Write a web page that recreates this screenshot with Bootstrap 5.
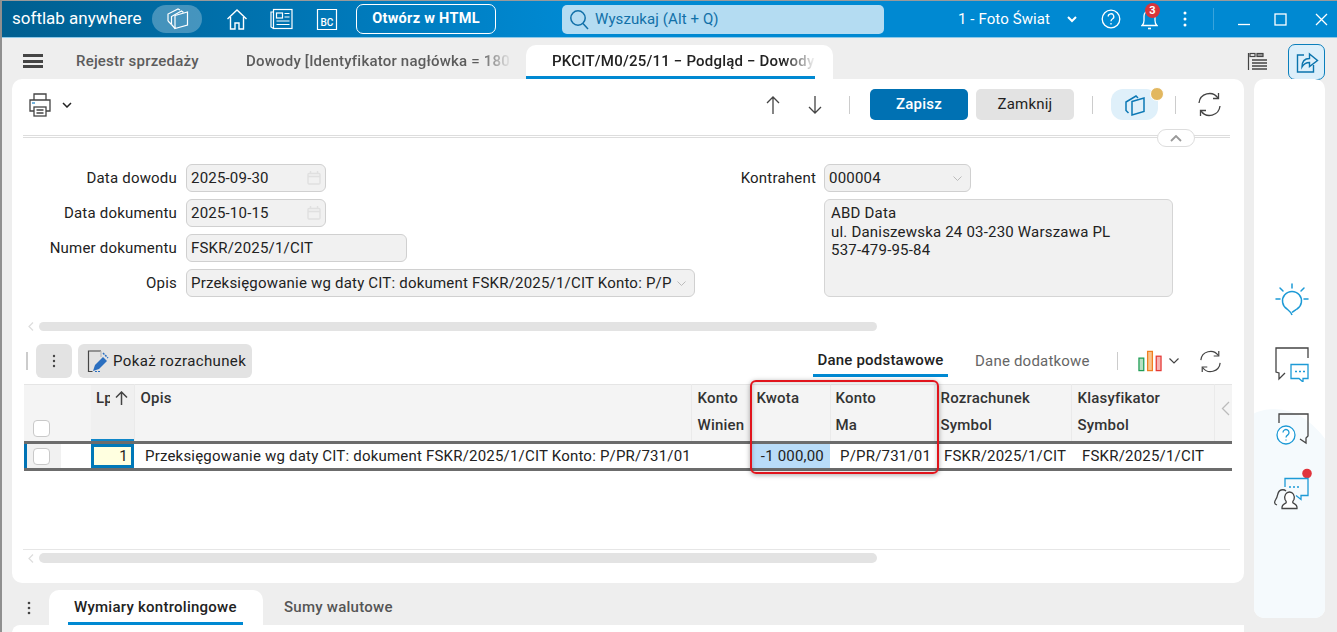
<!DOCTYPE html>
<html lang="pl">
<head>
<meta charset="utf-8">
<title>softlab anywhere</title>
<link href="https://cdn.jsdelivr.net/npm/bootstrap@5.3.0/dist/css/bootstrap.min.css" rel="stylesheet">
<style>
html,body{height:632px;overflow:hidden}
body{width:1337px;margin:0;background:#eee;font-family:Roboto,"Liberation Sans",sans-serif;font-size:15px;color:#222;letter-spacing:.2px}
svg{display:block;flex:none}
.win{height:632px;border-left:2px solid #8f8f8f;border-top:1px solid #9a9a9a;position:relative;overflow:hidden}
.tbar{height:37px;background:linear-gradient(90deg,#005f90 0,#0078b8 25%,#0089d2 42%,#0089d2 100%);color:#fff;border-bottom:1px solid #8cc8e8}
.brand{margin-left:10px;width:140px;font-size:17px;letter-spacing:0;white-space:nowrap}
.appill{width:50px;height:28px;border-radius:14px;background:rgba(255,255,255,.27);justify-content:center}
.openbtn{width:140px;height:30px;margin-left:18px;border:1.5px solid #fff;border-radius:7px;color:#fff;font-weight:700;font-size:14.5px;background:none;padding:0;letter-spacing:.3px}
.srch{width:322px;height:29px;margin-left:66px;background:#b4dcf2;border-radius:5px;color:#1170a8;font-size:15px;letter-spacing:.1px;padding-left:7px;gap:6px}
.comp{margin-left:74px;width:109px;font-size:15px;letter-spacing:.1px;white-space:nowrap}
.badgered{position:absolute;left:4px;top:-5px;width:15px;height:15px;border-radius:50%;background:#d9343a;color:#fff;font-size:11px;font-weight:700;letter-spacing:0;line-height:15px;text-align:center}
.tabsrow{height:41px;padding-left:21px}
.ham{width:20px;height:14px;margin-right:33px;margin-top:5px;border-top:3px solid #444;border-bottom:3px solid #444;position:relative}
.ham::after{content:"";position:absolute;left:0;right:0;top:2.5px;height:3px;background:#444}
.tabx{height:34px;align-self:flex-end;display:flex;align-items:center;font-weight:500;color:#5c5c5c;white-space:nowrap;padding-bottom:2px}
.tab1{width:170px}
.tab2{width:280px;overflow:hidden}
.tabtxt{display:block;overflow:hidden;-webkit-mask-image:linear-gradient(90deg,#000 88%,transparent 100%);mask-image:linear-gradient(90deg,#000 88%,transparent 100%)}
.tab2 .tabtxt{width:266px}
.tabon{width:307px;background:#fff;border-radius:10px 10px 0 0;padding-left:26px;color:#222;position:relative}
.tabon .tabtxt{width:264px}
.tabon::after{content:"";position:absolute;left:0;width:289px;bottom:0;height:3px;background:#0089d2}
.listicon{margin-left:auto;margin-top:5px}
.sharebtn{width:37px;height:36px;margin-left:20px;margin-right:12px;align-self:flex-end;margin-bottom:-1px;position:relative;border:1.5px solid #0a7fbc;border-radius:7px;background:#dceffa;justify-content:center}
.bodyrow{padding-left:10px;gap:10px}
.maincard{width:1232px;height:504px;background:#fff;border-radius:10px;padding:0 12px 0 11px;position:relative}
.side{width:71px;height:539px;border-radius:10px;background:#fff;overflow:hidden;position:relative}
.sidebg{position:absolute;left:-60px;right:-30px;top:330px;bottom:-60px;background:#f5fafd;border-radius:50% 50% 0 0}
.sicons{position:relative;padding-top:204px;padding-left:5px}
.tools{height:51px;padding-left:6px}
.sep{width:1px;height:18px;background:#ccc}
.btnsave,.btnclose{width:98px;height:31px;border-radius:5px;border:0;font-size:15px;font-weight:500;padding:0;letter-spacing:.2px}
.btnsave{background:#0071b3;color:#fff}
.btnclose{background:#e3e3e3;color:#222;margin-left:8px;font-weight:400}
.bookpill{width:47px;height:31px;border-radius:12px;background:#dff0fa;position:relative;justify-content:center}
.bookpill::after{content:"";position:absolute;right:-6px;top:-2px;width:14px;height:14px;border-radius:50%;background:#e2b75f;border:1px solid #fff}
.collapser{height:18px;position:relative;margin-right:2px;margin-top:-1px}
.collapser::before{content:"";position:absolute;left:0;right:0;top:6px;height:3px;border-top:1px solid #ddd;border-bottom:1px solid #ddd}
.colpill{position:absolute;left:1134px;top:0;width:38px;height:18px;border:1px solid #ddd;border-radius:9px;background:#fff;justify-content:center}
.formarea{margin-top:17px;height:133px}
.fcol{width:663px;gap:7px}
.fline{height:28px;gap:9px}
.flab{width:154px;flex:none;text-align:right;white-space:nowrap}
.flab2{width:130px}
.fbox{height:28px;flex:none;background:#f1f1f1;border:1px solid #d0d0d0;border-radius:6px;padding:0 4px;white-space:nowrap;color:#222}
.w140{width:140px}.w221{width:221px}.w509{width:509px}.w147{width:147px}
.opistxt{flex:1}
.addr{width:349px;height:98px;margin-left:138px;margin-top:7px;background:#f1f1f1;border:1px solid #d5d5d5;border-radius:6px;padding:4px 6px;line-height:18.5px}
.hscr{height:9px;padding-left:5px;gap:5px}
.hscr1{margin-top:25px}
.thumb{width:838px;height:9px;border-radius:5px;background:#e3e3e3}
.gtools{margin-top:13px;height:34px;gap:6px}
.vbar{width:2px;height:18px;background:#ccc;margin:0 2px 0 3px}
.gbtn{height:34px;background:#e3e3e3;border-radius:6px;border:0;padding:0}
.gb1{width:36px;justify-content:center}
.gb2{width:174px;padding-left:9px;gap:4px;color:#222;letter-spacing:.37px}
.dtabs{margin-left:auto;height:34px;font-weight:500}
.dt1{width:135px;text-align:center;border-bottom:3px solid #0089d2;height:32px;line-height:30px;margin-right:27px;color:#222;margin-top:-1px}
.dt2{width:114px;color:#666;font-weight:400;margin-right:28px;white-space:nowrap}
.tablewrap{margin-top:6px;width:1208px;height:86px;position:relative;margin-left:1px}
.gtab{table-layout:fixed;width:1208px;border-collapse:collapse;margin:0}
.gtab th,.gtab td{padding:0;background:none;border:0;color:#222;white-space:nowrap;overflow:hidden}
.gtab thead tr{height:58px;background:#f4f4f4;border-top:1px solid #e5e5e5}
.gtab th{font-weight:500;vertical-align:top;padding:0 0 0 6px;line-height:27px;border-right:1px solid #eaeaea;color:#333}
.gtab th.nob{border-right:0}
.gtab th.thma{padding-left:5px}
.gtab tbody tr{height:24px;border-top:3px solid #6c6c6c;border-bottom:3px solid #6c6c6c}
.c0{width:67px}.c1{width:43px}.c2{width:557px}.c3{width:59px}.c4{width:80px}.c5{width:104px}.c6{width:137px}.c7{width:143px}.c8{width:18px}
.chk{display:block;width:17px;height:17px;border:1px solid #c9c9c9;border-radius:4px;background:#fff}
.gtab th.cchk{padding:35px 0 0 9px;border:0}
.gtab td.cchk{box-shadow:inset 3px 0 0 #0073b5;padding-left:3px}
.cchkbg{display:flex;align-items:center;height:24px;width:34px;background:#f1f1f1;padding-left:6px}
.gtab th.clp{padding:0 0 0 5px;position:relative;box-shadow:inset 0 -2px 0 #0f86c8;background:#f0f0f0}
.sortbox{position:absolute;right:0;top:0;width:24px;height:28px;background:#f0f0f0;display:flex;justify-content:center;padding-top:6px}
.gtab td.lpcell{background:#ffffe0;box-shadow:inset 0 0 0 3px #0078b8;text-align:right;padding-right:6px}
.gtab td.tdop{padding-left:11px}
.gtab td.kw{background:#b9dcf8;text-align:right;padding-right:6px}
.gtab td.ma{padding-left:10px}
.gtab td.roz{padding-left:10px}
.gtab td.kla{padding-left:11px}
.redbox{position:absolute;left:726px;top:-4px;width:189px;height:94px;border:2px solid #e1141c;border-radius:6px;box-shadow:0 1px 5px rgba(0,0,0,.35),inset 0 0 4px rgba(0,0,0,.25);pointer-events:none}
.hline{margin-top:79px;height:1px;background:#e6e6e6;margin-right:2px}
.hscr2{margin-top:3px;height:10px}
.hscr2 .thumb{height:10px}
.btabs{height:35px;margin-top:7px}
.dots3{width:37px;padding-left:15px}
.btab{height:35px;font-weight:500;display:flex;align-items:center;letter-spacing:.25px}
.bt1{width:214px;background:#fff;border-radius:10px 10px 0 0;padding-left:25px;position:relative;color:#222}
.bt1::after{content:"";position:absolute;left:19px;width:175px;bottom:0;height:3px;background:#0089d2}
.bt2{margin-left:21px;color:#555}
.peek{height:9px;background:#fff;border-radius:8px 0 0 0}
</style>
</head>
<body>
<div class="win">
  <div class="tbar d-flex align-items-center">
    <div class="brand">softlab anywhere</div>
    <div class="appill d-flex align-items-center">
      <svg width="24" height="22" viewBox="0 0 24 22" fill="none" stroke="#fff" stroke-width="1.200"><path d="M10 7.500 22.500 4v13L10 20.500z"/><path d="M6.500 16.500v-8l10-5.500 2 1.500"/><path d="M10 20.500 6.500 16.500"/><path d="M3 13V6l10-5 2 1"/><path d="M3 13l3.500 3.500"/></svg>
    </div>
    <svg class="ms-4" width="22" height="23" viewBox="0 0 22 23" fill="none" stroke="#fff" stroke-width="1.400"><path d="M1.500 11 11 2l9.500 9"/><path d="M4.500 9v12h4.500v-6h4v6h4.500V9"/></svg>
    <svg style="margin-left:22px" width="23" height="22" viewBox="0 0 23 22" fill="none" stroke="#fff" stroke-width="1.200"><rect x="3.500" y="1.500" width="18.500" height="19"/><path d="M3.500 4H1v15l2.500 1.500"/><rect x="6.500" y="5" width="6" height="5"/><path d="M14.500 5.500h5M14.500 9h5M6.500 13h13M6.500 16.500h13"/></svg>
    <svg style="margin-left:23px" width="22" height="23" viewBox="0 0 22 23" fill="none"><path d="M1.500 1.500h19v20h-19z" stroke="#fff" stroke-width="1.200"/><text x="4.500" y="17.500" fill="#fff" font-family="Roboto,sans-serif" font-size="10" font-weight="500" letter-spacing="0">BC</text></svg>
    <button class="openbtn">Otwórz w HTML</button>
    <div class="srch d-flex align-items-center">
      <svg width="20" height="21" viewBox="0 0 20 21" fill="none" stroke="#1170a8" stroke-width="1.500"><circle cx="9" cy="9" r="7.200"/><path d="m14 14.500 5 5.500"/></svg>
      <span>Wyszukaj (Alt + Q)</span>
    </div>
    <div class="comp">1 - Foto Świat</div>
    <svg width="10" height="7" viewBox="0 0 10 7" fill="none" stroke="#fff" stroke-width="2"><path d="m1 1 4 4 4-4"/></svg>
    <svg style="margin-left:24px" width="20" height="20" viewBox="0 0 20 20" fill="none" stroke="#fff" stroke-width="1.300"><circle cx="10" cy="10" r="8.800"/><path d="M7.200 7.600A2.800 2.800 0 1 1 11.400 10c-1 .6-1.400 1.200-1.400 2.300"/><path d="M10 14v1.400"/></svg>
    <div class="position-relative" style="margin-left:20px">
      <svg width="17" height="22" viewBox="0 0 17 22" fill="none" stroke="#fff" stroke-width="1.300"><path d="M1 17.500c1.500-1 2-2 2-5V8a5.500 5.500 0 0 1 11 0v4.500c0 3 .5 4 2 5z"/><path d="M7 20.500h3" stroke-width="1.600"/></svg>
      <span class="badgered">3</span>
    </div>
    <svg style="margin-left:25px" width="4" height="16" viewBox="0 0 4 16" fill="#fff"><circle cx="2" cy="2" r="1.500"/><circle cx="2" cy="8" r="1.500"/><circle cx="2" cy="14" r="1.500"/></svg>
    <div style="width:1px;height:22px;background:#39a4dc;margin-left:26px"></div>
    <svg style="margin-left:23px" width="14" height="14" viewBox="0 0 14 14" fill="none" stroke="#fff" stroke-width="1.300"><path d="M1 12.500h12"/></svg>
    <svg style="margin-left:23px" width="13" height="13" viewBox="0 0 13 13" fill="none" stroke="#fff" stroke-width="1.300"><rect x="1" y="1" width="11" height="11"/></svg>
    <svg style="margin-left:28px" width="13" height="13" viewBox="0 0 13 13" fill="none" stroke="#fff" stroke-width="1.300"><path d="m1 1 11 11M12 1 1 12"/></svg>
  </div>

  <div class="tabsrow d-flex align-items-center">
    <div class="ham"></div>
    <div class="tabx tab1">Rejestr sprzedaży</div>
    <div class="tabx tab2"><span class="tabtxt">Dowody [Identyfikator nagłówka = 180</span></div>
    <div class="tabx tabon"><span class="tabtxt">PKCIT/M0/25/11 − Podgląd − Dowody</span></div>
    <svg class="listicon" width="21" height="19" viewBox="0 0 21 19" fill="none" stroke="#444" stroke-width="1.200"><path d="M1.500 1v17"/><rect x="3" y="1.500" width="5" height="3"/><rect x="10" y="1.500" width="6" height="3" fill="#999"/><path d="M5 8h15M5 11h15M5 14h15M5 17h15" stroke-width="1.500"/></svg>
    <div class="sharebtn d-flex align-items-center">
      <svg width="24" height="24" viewBox="0 0 24 24" fill="none" stroke="#0a74ad" stroke-width="1.400"><path d="M9 5H2.500v17h16v-7"/><path d="M7 17c0-6 3.500-8.500 7.500-8.500V4l8 6.500-8 6V12.500c-3 0-5.500 1-7.500 4.500z"/></svg>
    </div>
  </div>

  <div class="bodyrow d-flex">
    <div class="d-flex flex-column">
    <main class="maincard">
      <div class="tools d-flex align-items-center">
        <svg width="22" height="24" viewBox="0 0 22 24" fill="none" stroke="#444" stroke-width="1.300"><path d="M5 7V1h12v6"/><path d="M5 18H1V7h20v11h-4"/><rect x="5" y="14" width="12" height="9" fill="#fff"/><path d="M7.500 17h7M7.500 20h7"/><path d="M3 10h3" stroke="#2a8ccb"/></svg>
        <svg style="margin-left:11px" width="10" height="6" viewBox="0 0 10 6" fill="none" stroke="#222" stroke-width="1.500"><path d="m1 1 4 4 4-4"/></svg>
        <svg style="margin-left:auto" width="14" height="18" viewBox="0 0 14 18" fill="none" stroke="#444" stroke-width="1.300"><path d="M7 18V1M1 7l6-6 6 6"/></svg>
        <svg style="margin-left:28px" width="14" height="18" viewBox="0 0 14 18" fill="none" stroke="#444" stroke-width="1.300"><path d="M7 0v17M1 11l6 6 6-6"/></svg>
        <div class="sep" style="margin-left:27px;margin-right:20px"></div>
        <button class="btnsave">Zapisz</button>
        <button class="btnclose">Zamknij</button>
        <div class="sep" style="margin-left:18px;margin-right:18px"></div>
        <div class="bookpill d-flex align-items-center">
          <svg width="22" height="22" viewBox="0 0 22 22" fill="none" stroke="#0b78b5" stroke-width="1.500"><path d="M8 7.500 20 4v13.500L8 21z"/><path d="M4.500 19 2 16.500V8l10-6 2 2"/></svg>
        </div>
        <div class="sep" style="margin-left:17px;margin-right:21px"></div>
        <svg style="margin-right:10px" width="25" height="25" viewBox="0 0 25 25" fill="none" stroke="#444" stroke-width="1.300"><path d="M2 11a10.500 10.500 0 0 1 19-5"/><path d="M21.500 1v5.500H16"/><path d="M23 14a10.500 10.500 0 0 1-19 5"/><path d="M3.500 24v-5.500H9"/></svg>
      </div>
      <div class="collapser">
        <div class="colpill d-flex align-items-center"><svg width="12" height="7" viewBox="0 0 12 7" fill="none" stroke="#999" stroke-width="1.800"><path d="m1 6 5-5 5 5"/></svg></div>
      </div>

      <div class="formarea d-flex">
        <div class="fcol d-flex flex-column">
          <div class="fline d-flex align-items-center"><div class="flab">Data dowodu</div><div class="fbox w140 d-flex align-items-center justify-content-between">2025-09-30<svg width="14" height="14" viewBox="0 0 14 14" fill="none" stroke="#e0e0e0" stroke-width="1.400"><rect x="1" y="2.500" width="12" height="10.500" rx="1"/><path d="M1 5.500h12M3.500 0v3M10.500 0v3"/></svg></div></div>
          <div class="fline d-flex align-items-center"><div class="flab">Data dokumentu</div><div class="fbox w140 d-flex align-items-center justify-content-between">2025-10-15<svg width="14" height="14" viewBox="0 0 14 14" fill="none" stroke="#e0e0e0" stroke-width="1.400"><rect x="1" y="2.500" width="12" height="10.500" rx="1"/><path d="M1 5.500h12M3.500 0v3M10.500 0v3"/></svg></div></div>
          <div class="fline d-flex align-items-center"><div class="flab">Numer dokumentu</div><div class="fbox w221 d-flex align-items-center">FSKR/2025/1/CIT</div></div>
          <div class="fline d-flex align-items-center"><div class="flab">Opis</div><div class="fbox w509 d-flex align-items-center"><span class="opistxt">Przeksięgowanie wg daty CIT: dokument FSKR/2025/1/CIT Konto: P/P</span><svg class="me-1" width="9" height="5" viewBox="0 0 9 5" fill="none" stroke="#bbb"><path d="m.5.500 4 4 4-4"/></svg></div></div>
        </div>
        <div class="d-flex flex-column">
          <div class="fline d-flex align-items-center" style="gap:8px"><div class="flab flab2">Kontrahent</div><div class="fbox w147 d-flex align-items-center justify-content-between">000004<svg class="me-1" width="9" height="5" viewBox="0 0 9 5" fill="none" stroke="#bbb"><path d="m.5.500 4 4 4-4"/></svg></div></div>
          <div class="addr">ABD Data<br>ul. Daniszewska 24 03-230 Warszawa PL<br>537-479-95-84</div>
        </div>
      </div>

      <div class="hscr hscr1 d-flex align-items-center">
        <svg width="6" height="9" viewBox="0 0 6 9" fill="none" stroke="#ddd" stroke-width="1.200"><path d="M5 .5 1 4.500l4 4"/></svg>
        <div class="thumb"></div>
      </div>

      <div class="gtools d-flex align-items-center">
        <div class="vbar"></div>
        <button class="gbtn gb1 d-flex align-items-center"><svg width="4" height="14" viewBox="0 0 4 14" fill="#444"><circle cx="2" cy="2" r="1.200"/><circle cx="2" cy="7" r="1.200"/><circle cx="2" cy="12" r="1.200"/></svg></button>
        <button class="gbtn gb2 d-flex align-items-center">
          <svg width="22" height="23" viewBox="0 0 22 23" fill="none"><path d="M14 1H1.500v20.500h4" stroke="#444" stroke-width="1.200"/><path d="M14 1v6" stroke="#bbb" stroke-width="1.200"/><path d="M6 21l2-6 8-8 4 4-8 8z" fill="#2b6fc0"/><path d="M16 3l5 5" stroke="#2b6fc0" stroke-width="1.500" stroke-dasharray="2 1"/><path d="M8 21.500h6" stroke="#2b6fc0" stroke-dasharray="2 1"/></svg>
          <span>Pokaż rozrachunek</span>
        </button>
        <div class="dtabs d-flex align-items-center">
          <div class="dt1">Dane podstawowe</div>
          <div class="dt2">Dane dodatkowe</div>
          <div class="sep" style="margin-right:20px"></div>
          <svg width="24" height="22" viewBox="0 0 25 22" fill="none" stroke-width="1.300"><rect x="1" y="8" width="5" height="13" fill="#b5e0c3" stroke="#1f9d55"/><rect x="10" y="1" width="5" height="20" fill="#f9c58f" stroke="#ef7f22"/><rect x="19" y="6" width="5" height="15" fill="#f6b3b3" stroke="#e53935"/></svg>
          <svg style="margin-left:6px" width="12" height="6" viewBox="0 0 11 6" fill="none" stroke="#444" stroke-width="1.200"><path d="m1 .5 4.500 4.500L10 .5"/></svg>
          <svg style="margin-left:19px;margin-right:10px" width="23" height="23" viewBox="0 0 25 25" fill="none" stroke="#444" stroke-width="1.300"><path d="M2 11a10.500 10.500 0 0 1 19-5"/><path d="M21.500 1v5.500H16"/><path d="M23 14a10.500 10.500 0 0 1-19 5"/><path d="M3.500 24v-5.500H9"/></svg>
        </div>
      </div>

      <div class="tablewrap">
        <table class="gtab">
          <colgroup><col class="c0"><col class="c1"><col class="c2"><col class="c3"><col class="c4"><col class="c5"><col class="c6"><col class="c7"><col class="c8"></colgroup>
          <thead>
            <tr>
              <th class="cchk"><span class="chk"></span></th>
              <th class="clp">Lp<span class="sortbox"><svg width="13" height="14" viewBox="0 0 13 14" fill="none" stroke="#444" stroke-width="1.500"><path d="M6.500 14V1M1 6.500l5.500-5.500L12 6.500"/></svg></span></th>
              <th>Opis</th>
              <th>Konto<br>Winien</th>
              <th>Kwota</th>
              <th class="thma">Konto<br>Ma</th>
              <th>Rozrachunek<br>Symbol</th>
              <th>Klasyfikator<br>Symbol</th>
              <th class="nob"><svg class="mt-3" width="9" height="15" viewBox="0 0 9 15" fill="none" stroke="#bbb" stroke-width="1.300"><path d="M8 1 1.500 7.500 8 14"/></svg></th>
            </tr>
          </thead>
          <tbody>
            <tr>
              <td class="cchk"><span class="cchkbg"><span class="chk"></span></span></td>
              <td class="lpcell">1</td>
              <td class="tdop">Przeksięgowanie wg daty CIT: dokument FSKR/2025/1/CIT Konto: P/PR/731/01</td>
              <td></td>
              <td class="kw">-1 000,00</td>
              <td class="ma">P/PR/731/01</td>
              <td class="roz">FSKR/2025/1/CIT</td>
              <td class="kla">FSKR/2025/1/CIT</td>
              <td></td>
            </tr>
          </tbody>
        </table>
        <div class="redbox"></div>
      </div>

      <div class="hline"></div>
      <div class="hscr hscr2 d-flex align-items-center">
        <svg width="6" height="9" viewBox="0 0 6 9" fill="none" stroke="#ddd" stroke-width="1.200"><path d="M5 .5 1 4.500l4 4"/></svg>
        <div class="thumb"></div>
      </div>
    </main>
    <div class="btabs d-flex align-items-center">
      <div class="dots3"><svg width="4" height="14" viewBox="0 0 4 14" fill="#444"><circle cx="2" cy="2" r="1.300"/><circle cx="2" cy="7" r="1.300"/><circle cx="2" cy="12" r="1.300"/></svg></div>
      <div class="btab bt1">Wymiary kontrolingowe</div>
      <div class="btab bt2">Sumy walutowe</div>
    </div>
    <div class="peek"></div>
    </div>

    <aside class="side">
      <div class="sidebg"></div>
      <div class="sicons d-flex flex-column align-items-center">
        <svg width="34" height="34" viewBox="0 0 34 34" fill="none" stroke="#1d9ad6" stroke-width="1.500"><path d="M17 32c-.5-2.500-2-3.500-5-6a9.500 9.500 0 1 1 10 0c-1.500 1-3.500 2-5 3.500"/><path d="M17 1v4M5 5l3 3M29 5l-3 3M1 16h4M29 16h4" stroke-linecap="round"/></svg>
        <svg style="margin-top:30px" width="35" height="35" viewBox="0 0 35 35" fill="none" stroke-width="1.300"><path d="M33 11V1H1v24l3 1v6l6-6" stroke="#444"/><path d="M16 17.500h17v14h-5v3.500l-4-3.500h-8z" fill="#fff" stroke="#1d9ad6"/><path d="M20 24.500h2M24 24.500h2M28 24.500h2" stroke="#1d9ad6"/></svg>
        <svg style="margin-top:31px" width="35" height="32" viewBox="0 0 35 32" fill="none" stroke-width="1.300"><path d="M4 10V1h29v22l-2 2v5l-6-4" stroke="#444"/><circle cx="11" cy="22" r="9" fill="#fff" stroke="#1d9ad6"/><path d="M8 19.500a3 3 0 1 1 4.800 2.400c-1 .7-1.800 1.300-1.800 2.600M11 26.500v1" stroke="#1d9ad6"/></svg>
        <svg style="margin-top:23px" width="39" height="42" viewBox="0 0 39 42" fill="none" stroke-width="1.300"><circle cx="34" cy="5.500" r="4.800" fill="#e0343c"/><path d="M12 19v-8.500h23v17h-7v4l-5-4" stroke="#1d9ad6"/><path d="M16 19h2M20 19h2M24 19h2" stroke="#1d9ad6"/><path d="M4 37c-3-1-3-3-1-6 2-2 1-8 5-9 2-.5 4 0 5 1" stroke="#444"/><path d="M9 40.500c-.5-3.500 2-4.500 4-5.500 1-1 0-2-1-3.500-1-4 1-7.500 4.500-7.500s5.500 3.500 4.500 7.500c-1 1.500-2 2.500-1 3.500 2 1 4.500 2 4 5.500z" fill="#fff" stroke="#444"/></svg>
      </div>
    </aside>
  </div>
</div>
<script src="https://cdn.jsdelivr.net/npm/bootstrap@5.3.0/dist/js/bootstrap.bundle.min.js"></script>
</body>
</html>
